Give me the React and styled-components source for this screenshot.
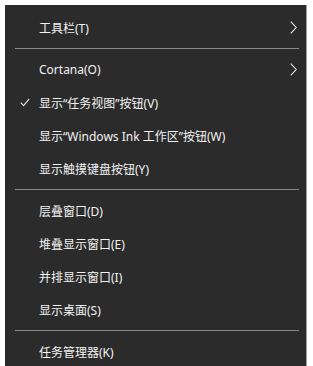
import React from "react";
import styled, { createGlobalStyle } from "styled-components";

const GlobalStyle = createGlobalStyle`
  html, body {
    margin: 0;
    padding: 0;
    background: #ffffff;
    height: 100%;
    overflow: hidden;
  }
`;

const groups = [
  [{ label: "工具栏(T)", sub: true }],
  [
    { label: "Cortana(O)", sub: true },
    { label: "显示“任务视图”按钮(V)", checked: true },
    { label: "显示“Windows Ink 工作区”按钮(W)" },
    { label: "显示触摸键盘按钮(Y)" },
  ],
  [
    { label: "层叠窗口(D)" },
    { label: "堆叠显示窗口(E)" },
    { label: "并排显示窗口(I)" },
    { label: "显示桌面(S)" },
  ],
  [{ label: "任务管理器(K)" }],
];

function Check() {
  return (
    <svg width="10" height="9" viewBox="0 0 10 9">
      <path d="M0.8 4.6 L3.6 7.6 L9.2 0.8" fill="none" stroke="#e8e8e8" strokeWidth="1.1" />
    </svg>
  );
}

function Chevron() {
  return (
    <svg width="7" height="13" viewBox="0 0 7 13">
      <path d="M0.8 0.6 L6.2 6.5 L0.8 12.4" fill="none" stroke="#e8e8e8" strokeWidth="1.1" />
    </svg>
  );
}

function App() {
  return (
    <>
      <GlobalStyle />
      <Page>
        <Menu>
          {groups.map((items, gi) => (
            <React.Fragment key={gi}>
              {gi > 0 && <Separator />}
              {items.map((item) => (
                <Item key={item.label}>
                  <Mark>{item.checked && <Check />}</Mark>
                  <Label>{item.label}</Label>
                  <Arrow>{item.sub && <Chevron />}</Arrow>
                </Item>
              ))}
            </React.Fragment>
          ))}
        </Menu>
      </Page>
    </>
  );
}

export default App;

const Page = styled.div`
  padding: 5px 5px 0 5px;
  height: 366px;
  box-sizing: border-box;
`;

const Menu = styled.div`
  width: 302px;
  height: 100%;
  background: #2b2b2b;
  border-right: 1px solid #a0a0a0;
  box-sizing: border-box;
  padding-top: 6px;
  font-family: "Noto Sans", "Noto Sans CJK SC", sans-serif;
  font-size: 12px;
  color: #f2f2f2;
`;

const Item = styled.div`
  display: flex;
  align-items: center;
  height: 33px;
`;

const Mark = styled.div`
  width: 34px;
  display: flex;
  justify-content: flex-end;
  padding-right: 9px;
  box-sizing: border-box;
`;

const Label = styled.div`
  flex: 1;
  white-space: nowrap;
`;

const Arrow = styled.div`
  width: 16px;
  display: flex;
  align-items: center;
`;

const Separator = styled.div`
  height: 1px;
  margin: 4px 7px 4px 10px;
  background: #8a8a8a;
`;
